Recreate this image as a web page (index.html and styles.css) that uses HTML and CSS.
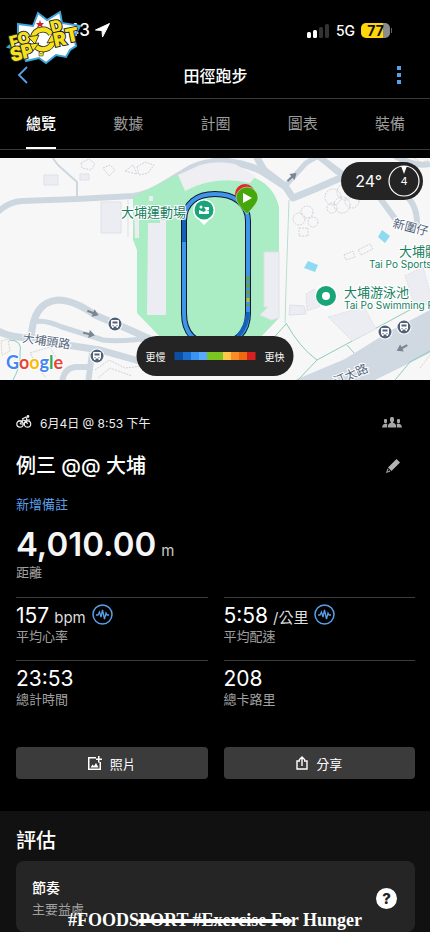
FILE: index.html
```html
<!DOCTYPE html>
<html lang="zh-Hant">
<head>
    <meta charset="UTF-8">
    <title>田徑跑步</title>
    <meta name="viewport" content="width=device-width, initial-scale=1.0">
    <link rel="stylesheet" href="styles.css">
</head>
<body>

    <div class="app">
        <!-- Phone status bar -->
        <div class="status-bar">
            <div class="status-time">
                <span>43</span>
                <svg width="15" height="15" viewBox="0 0 15 15"><path d="M14.500 0.500L7.500 14 7 7.500 0.500 7z" fill="#fff" stroke="#fff" stroke-linejoin="round"/></svg>
            </div>
            <div class="status-right">
                <svg width="23" height="15" viewBox="0 0 23 15">
                    <rect x="0" y="9" width="4" height="6" rx="1.500" fill="#fff"/>
                    <rect x="6" y="7" width="4" height="8" rx="1.500" fill="#fff"/>
                    <rect x="12" y="4" width="4" height="11" rx="1.500" fill="#333"/>
                    <rect x="18" y="1" width="4" height="14" rx="1.500" fill="#333"/>
                </svg>
                <span class="network">5G</span>
                <span class="battery">77</span>
            </div>
        </div>

        <!-- Charity logo -->
        <svg class="logo" width="76" height="58" viewBox="0 0 76 58">
            <path d="M12 15L27 17 32 4 41 11 54 3 56 14 74 17 68 28 70 37 64 41 60 48 50 46 40 54 33 49 20 52 16 42 2 38 12 30z" fill="#fff" stroke="#3da5d9" stroke-width="2"/>
            <path d="M34 11l1 3 3 0-2 2 1 3-3-2-3 2 1-3-2-2 3 0z" fill="#d0212d"/>
            <path d="M33 43l2 2 3-2-1 4-4 0z" fill="#f6e11c" stroke="#222" stroke-width="0.500"/>
            <g class="logo-text">
                <text transform="translate(5 39) rotate(-14)" font-size="16">F</text>
                <text transform="translate(13 36) rotate(-14)" font-size="16">O</text>
                <text transform="translate(46 24) rotate(-14)" font-size="16">D</text>
                <text transform="translate(6 53) rotate(-14)" font-size="19">S</text>
                <text transform="translate(17 50) rotate(-14)" font-size="19">P</text>
            </g>
            <g fill="none">
                <path d="M27 28A10 10 0 0 1 45 25M47 32A10 10 0 0 1 29 36" stroke="#222" stroke-width="6"/>
                <path d="M27 28A10 10 0 0 1 45 25M47 32A10 10 0 0 1 29 36" stroke="#f6e11c" stroke-width="4.500"/>
            </g>
            <path d="M22 28l11-2-4 9zM52 32l-11 2 5-9zM24 35l9-1-6 8z" fill="#f6e11c" stroke="#222" stroke-width="0.800"/>
            <g class="logo-text">
                <text transform="translate(49 38) rotate(-12)" font-size="19">R</text>
                <text transform="translate(61 34) rotate(-12)" font-size="19">T</text>
            </g>
        </svg>

        <header class="nav-bar">
            <button class="icon-btn" aria-label="返回">
                <svg width="12" height="18" viewBox="0 0 12 18"><path d="M10 1L2 9l8 8" fill="none" stroke="#5a9fe8" stroke-width="1.800"/></svg>
            </button>
            <h1>田徑跑步</h1>
            <button class="icon-btn" aria-label="更多">
                <svg width="4" height="18" viewBox="0 0 4 18" fill="#5a9fe8"><path d="M0 0h4v4H0zM0 7h4v4H0zM0 14h4v4H0z"/></svg>
            </button>
        </header>

        <nav class="tabs">
            <a href="#" class="active">總覽</a>
            <a href="#">數據</a>
            <a href="#">計圈</a>
            <a href="#">圖表</a>
            <a href="#">裝備</a>
        </nav>

        <!-- Route map -->
        <div class="map">
            <svg class="map-svg" viewBox="0 0 430 222" preserveAspectRatio="xMidYMid slice">
                <defs>
                    <g id="bus">
                        <circle r="7.500" fill="#fff"/>
                        <circle r="6.500" fill="#50627a"/>
                        <path d="M-3-4h6q1 0 1 1v5.500h-1v1.500h-1.500v-1.500h-3v1.500h-1.500v-1.500h-1V-3q0-1 1-1z" fill="#fff"/>
                        <path d="M-2.500-2.500h5v2h-5zM-2.500 1h1v1h-1zM1.500 1h1v1h-1z" fill="#50627a"/>
                    </g>
                    <path id="arrow" d="M-6-1h6v-3l6 4-6 4V1h-6z" fill="#7a8592"/>
                </defs>
                <rect width="430" height="222" fill="#f8f7f8"/>

                <!-- Roads -->
                <g fill="none" stroke="#cdd7e0" stroke-linejoin="round">
                    <path d="M-2 54Q8 44 22 43L77 41 133 38Q148 36 162 27L190 10Q205 3 220 3" stroke-width="6"/>
                    <path d="M77 40V24L58 7 52-1" stroke-width="2"/>
                    <path d="M212 2Q245 4 263 14L286 29" stroke-width="7"/>
                    <path d="M256-2L264 12 285 28 293 40 315 31 345 18" stroke-width="7"/>
                    <path d="M287 26L306 5 318-2 337 14 345 18" stroke-width="5"/>
                    <path d="M318-2L345 18 380 40 396 62M400 33Q418 44 417 68M395-2Q415 9 430 6" stroke-width="6"/>
                    <path d="M31 183Q32 144 58 142 74 142 95 157L130 172 150 181" stroke-width="7"/>
                    <path d="M33 164Q45 161 62 169L103 182Q122 184 150 180" stroke-width="5"/>
                    <path d="M-2 173Q10 180 33 180L60 186 100 192 150 206" stroke-width="7"/>
                    <path d="M62 226Q63 210 76 209H92M92 195L88 226" stroke-width="6"/>
                </g>
                <path d="M430 152L390 173 345 201 295 222H375L430 195z" fill="#d0d8e2"/>
                <path d="M289 42L286 130 285 165" fill="none" stroke="#b9decf"/>
                <g fill="none" stroke="#8fcdb5">
                    <path d="M286 165Q300 190 317 202L430 141M347 187l7 8M317 202L298 222M286 166L270 184M395 222L410 204 430 193"/>
                    <path d="M9 182Q23 182 20 195 21 208 13 222"/>
                </g>

                <!-- Buildings -->
                <g fill="#ecedf3" stroke="#dfe1e8" stroke-width="1">
                    <path d="M44 17h14v10H44zM80 16h9v6h-9zM101 44h20v31h-20zM128 42v37M290 147l14 1 2 8-17 1z"/>
                    <path d="M306 136l8-5 8 6-3 12-12 4zM405 118l18-9 10 36-18 4zM328 159l36-10 12 22-24 12z" stroke-dasharray="2 1"/>
                </g>
                <g fill="none" stroke="#cfd3d9" stroke-dasharray="2 1">
                    <path d="M81 5l8-4 6 5-4 6-9-2zM103 10l7-3 5 5-6 6zM125 13l8-6 4 9zM137 9l8-5 9 3-6 8-9 2z"/>
                    <circle cx="307" cy="54" r="6"/><circle cx="299" cy="61" r="6"/><circle cx="313" cy="64" r="5"/><path d="M299 70h9v8h-9z"/>
                    <circle cx="333" cy="39" r="8"/><circle cx="345" cy="34" r="8"/><circle cx="342" cy="47" r="8"/><circle cx="352" cy="43" r="7"/><circle cx="332" cy="50" r="5"/>
                    <path d="M344 97l9-4 2 6-9 3zM358 92l12-6 3 5-12 6zM30 195l20-6 8 14-20 7zM36 208l10 12M95 212l14-10 16 8 18-2M98 220l12-10 22 8"/>
                    <path d="M1 183l7-2 2 12-8 4zM414 0l8 5 6-3M424 180l6-4M420 210l10-13" stroke="#ddd5bf"/>
                </g>

                <!-- Sports ground -->
                <path d="M133 39L176 17 215 20 255 20Q274 28 279 49V160L258 182H163L137 155V92L133 82z" fill="#aaecc3"/>
                <path d="M178 17L200 7Q216 2 235 6L256 18 250 25Q215 17 185 33z" fill="#eeeef3"/>
                <g fill="#ecedf3">
                    <path d="M148 65h18v92h-19zM134 48h5v32h-4zM149 38h4v5h-4zM160 62h6v5h-6z"/>
                    <path d="M264 94h15v66l-8 2-11-5 8-8h-4z" stroke="#dce3e4"/>
                </g>
                <path d="M382 72l8 6-5 7-7-6zM308 103l10 4-3 7-11-4z" fill="#8edaf0"/>

                <use href="#arrow" transform="translate(93 155) rotate(22)"/>
                <use href="#arrow" transform="translate(89 176) rotate(12)"/>
                <use href="#arrow" transform="translate(292 19) rotate(-42)"/>
                <use href="#arrow" transform="translate(402 190) rotate(152)"/>
                <use href="#bus" x="115" y="166"/>
                <use href="#bus" x="97" y="198"/>
                <use href="#bus" x="385" y="174"/>
                <use href="#bus" x="404" y="169"/>

                <!-- Lap line -->
                <path d="M184 155V63C184 45 197 36 215 36S248 45 248 63V155C248 174 237 186 215 186S184 174 184 155z" fill="none" stroke="#0c1b33" stroke-width="6"/>
                <path d="M184 155V63C184 45 197 36 215 36S248 45 248 63V155C248 174 237 186 215 186S184 174 184 155z" fill="none" stroke="#3f95ea" stroke-width="4"/>
                <path d="M184 62v22M248 154q-1 14-10 24" fill="none" stroke="#1560b8" stroke-width="4"/>
                <path d="M248 118v30" stroke="#6f9e3c" stroke-width="3" stroke-dasharray="5 2"/>
                <path d="M248 140v4" stroke="#c5b62d" stroke-width="3"/>

                <!-- Place names -->
                <g class="place">
                    <text x="121" y="59">大埔運動場</text>
                    <text x="399" y="98">大埔體育館</text>
                    <text x="369" y="110" class="small">Tai Po Sports Centre</text>
                    <text x="344" y="139">大埔游泳池</text>
                    <text x="344" y="151" class="small">Tai Po Swimming Pool</text>
                </g>
                <g class="street">
                    <text transform="translate(22 184) rotate(8)">大埔頭路</text>
                    <text transform="translate(392 69) rotate(14)">新圍仔</text>
                    <text transform="translate(336 228) rotate(-24)">汀太路</text>
                </g>

                <!-- Pins -->
                <path d="M204 67l-5-5A11 11 0 1 1 209 62z" fill="#fff"/>
                <circle cx="204" cy="52" r="9.500" fill="#1aa578"/>
                <path d="M199 52v4h10v-3l-3-1-2 2zM204 49h5v3h-3z" fill="#fff"/>
                <circle cx="201" cy="49" r="1.500" fill="#fff"/>
                <path d="M326 153l-5-6A11 11 0 1 1 331 147z" fill="#fff"/>
                <circle cx="326" cy="138" r="10" fill="#1aa578"/><circle cx="326" cy="138" r="4" fill="#fff"/>
                <circle cx="245" cy="36" r="10" fill="#e3262d"/>
                <path d="M247 56Q236 45 236 40A11 11 0 0 1 258 40Q258 45 247 56z" fill="#45a70c" stroke="#e4f5d8" stroke-width="0.500"/>
                <path d="M243 35v10l9-5z" fill="#fff"/>

                <text class="google" x="6" y="211"><tspan fill="#4285f4">G</tspan><tspan fill="#ea4335">o</tspan><tspan fill="#fbbc05">o</tspan><tspan fill="#4285f4">g</tspan><tspan fill="#34a853">l</tspan><tspan fill="#ea4335">e</tspan></text>
            </svg>

            <div class="weather">
                <span>24°</span>
                <svg width="32" height="32" viewBox="0 0 32 32">
                    <circle cx="16" cy="16" r="15" fill="none" stroke="#fff" stroke-width="1.200"/>
                    <path d="M13 1h6l-3 8z" fill="#fff"/>
                    <text x="16" y="20">4</text>
                </svg>
            </div>

            <div class="pace-legend">
                <span>更慢</span>
                <div class="pace-scale"></div>
                <span>更快</span>
            </div>
        </div>

        <!-- Activity details -->
        <main class="details">
            <div class="row date-row">
                <svg width="16" height="14" viewBox="0 0 16 14" fill="none" stroke="#eee" stroke-width="1.200">
                    <circle cx="4" cy="9" r="3.200"/><circle cx="11.500" cy="9" r="3.200"/>
                    <path d="M4 9l3-4 3 1 1.500 3M4 9h4l3-5M6 4l4-2 1 3 3 0M2 6h5"/>
                    <circle cx="12" cy="1.500" r="0.800" fill="#eee"/>
                </svg>
                <span class="date">6月4日 @ 8:53 下午</span>
                <svg class="end" width="20" height="11" viewBox="0 0 20 11" fill="#a6a6a6">
                    <rect x="8" y="0" width="4" height="5" rx="1.500"/>
                    <path d="M6 10.500V8q1-2 3-2.500V4h2v1.500q2 .5 3 2.500v2.500z"/>
                    <rect x="2" y="2" width="3" height="4" rx="1"/>
                    <path d="M0 10.500Q.5 7 3.500 6.500L5.200 7v3.500z"/>
                    <rect x="15" y="2" width="3" height="4" rx="1"/>
                    <path d="M20 10.500Q19.500 7 16.500 6.500L14.800 7v3.500z"/>
                </svg>
            </div>
            <div class="row title-row">
                <h2>例三 @@ 大埔</h2>
                <button class="icon-btn end" aria-label="編輯">
                    <svg width="14" height="14" viewBox="0 0 14 14"><path d="M10.500 0L14 3.500 5.500 12 2 8.500zM1.500 9.500L4.500 12.500 0 14z" fill="#b3b3b3"/><path d="M2 10.500l1.500 1.500L1.500 12.500z" fill="#000"/></svg>
                </button>
            </div>
            <a href="#" class="add-note">新增備註</a>

            <div class="distance">4,010.00 <small>m</small></div>
            <div class="label">距離</div>

            <div class="metrics">
                <div class="metric">
                    <div class="value">157 <small>bpm</small>
                        <svg width="21" height="21" viewBox="0 0 21 21" fill="none" stroke="#5a9fe8"><circle cx="10.500" cy="10.500" r="9.500" stroke-width="1.500"/><path d="M4 11h2l1.500-3 1.500 5L10.500 6l2 9 1.500-6 1 2h2" stroke-width="1.300"/></svg>
                    </div>
                    <div class="label">平均心率</div>
                </div>
                <div class="metric">
                    <div class="value">5:58 <small>/公里</small>
                        <svg width="21" height="21" viewBox="0 0 21 21" fill="none" stroke="#5a9fe8"><circle cx="10.500" cy="10.500" r="9.500" stroke-width="1.500"/><path d="M4 11h2l1.500-3 1.500 5L10.500 6l2 9 1.500-6 1 2h2" stroke-width="1.300"/></svg>
                    </div>
                    <div class="label">平均配速</div>
                </div>
                <div class="metric">
                    <div class="value">23:53</div>
                    <div class="label">總計時間</div>
                </div>
                <div class="metric">
                    <div class="value">208</div>
                    <div class="label">總卡路里</div>
                </div>
            </div>

            <div class="actions">
                <button class="action-btn">
                    <svg width="14" height="14" viewBox="0 0 14 14" fill="#fff"><path d="M0 1h8v1.500H1.500v10h10V6H13v8H0zM10 0h1.500v2.500H14V4h-2.500v2.500H10V4H8V2.500h2zM2.500 11.500l2-3 1.500 1.500 2-3 2.500 4.500z"/></svg>
                    照片
                </button>
                <button class="action-btn">
                    <svg width="12" height="14" viewBox="0 0 12 14" fill="none" stroke="#fff" stroke-width="1.400"><path d="M4 5H1v8h10V5H8M6 10V1M3 4l3-3 3 3"/></svg>
                    分享
                </button>
            </div>
        </main>

        <!-- Evaluation -->
        <section class="evaluation">
            <h2>評估</h2>
            <div class="card">
                <div>
                    <h3>節奏</h3>
                    <div class="label">主要益處</div>
                </div>
                <button class="help end" aria-label="說明">?</button>
            </div>
        </section>

        <div class="hashtags">#FOODSPORT #Exercise For Hunger</div>
        <div class="home-bar"></div>
    </div>

</body>
</html>
```
FILE: styles.css
```css
/* General Styles */
* {
    box-sizing: border-box;
}

body {
    margin: 0;
    background-color: #000;
    color: #fff;
    font-family: Inter, "Noto Sans CJK TC", sans-serif;
}

h1, h2, h3 {
    margin: 0;
    font-weight: 500;
}

a {
    text-decoration: none;
}

button {
    border: none;
    color: #fff;
    font-family: inherit;
    cursor: pointer;
}

svg {
    display: block;
    flex-shrink: 0;
}

.app {
    position: relative;
    overflow: hidden;
}

.row {
    display: flex;
    align-items: center;
}

.end {
    margin-left: auto;
}

/* Status bar and header */
.status-bar {
    display: flex;
    justify-content: space-between;
    align-items: center;
    height: 52px;
    padding: 8px 40px 0 68px;
}

.status-time, .status-right {
    display: flex;
    align-items: center;
    gap: 6px;
}

.status-time {
    gap: 5px;
    font-size: 17px;
    font-weight: 500;
}

.network {
    font-size: 14px;
    font-weight: 500;
}

.battery {
    position: relative;
    width: 29px;
    border-radius: 5px;
    background: linear-gradient(to right, #ffd60a 77%, #8c8c8c 77%);
    color: #111;
    font-size: 14px;
    font-weight: 700;
    line-height: 15px;
    text-align: center;
}

.battery::after {
    content: "";
    position: absolute;
    right: -2px;
    top: 5px;
    width: 1px;
    height: 5px;
    background-color: #666;
}

.logo {
    position: absolute;
    left: 6px;
    top: 9px;
}

.logo-text {
    font-family: Inter, sans-serif;
    font-weight: 900;
    fill: #f6e11c;
    stroke: #222;
    stroke-width: 2px;
    paint-order: stroke;
}

.nav-bar {
    display: flex;
    justify-content: space-between;
    align-items: center;
    height: 47px;
    padding: 0 29px 0 17px;
    border-bottom: 1px solid #3a3a3a;
}

.nav-bar h1 {
    margin-left: 5px;
    font-size: 16px;
}

.icon-btn {
    padding: 0;
    background: none;
}

.tabs {
    display: flex;
    justify-content: space-between;
    height: 51px;
    padding: 0 25px 0 26px;
    border-bottom: 1px solid #3a3a3a;
}

.tabs a {
    color: #9c9c9c;
    font-size: 15px;
    line-height: 50px;
}

.tabs .active {
    border-bottom: 2px solid #fff;
    color: #fff;
    font-weight: 500;
}

/* Map */
.map {
    position: relative;
    height: 222px;
    margin-top: 8px;
}

.map-svg {
    width: 100%;
    height: 100%;
}

.place {
    fill: #168060;
    stroke: #fff;
    stroke-width: 2px;
    paint-order: stroke;
    font-size: 13px;
}

.place .small {
    font-size: 10px;
}

.street {
    fill: #52647c;
    stroke: #fff;
    stroke-width: 2px;
    paint-order: stroke;
    font-size: 12px;
}

.google {
    font-family: Lato, sans-serif;
    font-size: 18px;
    font-weight: 700;
    stroke: #fff;
    stroke-width: 2px;
    paint-order: stroke;
}

.weather, .pace-legend {
    position: absolute;
    display: flex;
    align-items: center;
    background-color: #242424;
    border-radius: 20px;
}

.weather {
    top: 4px;
    right: 7px;
    gap: 6px;
    height: 38px;
    padding: 0 3px 0 14px;
    font-size: 16px;
}

.weather text {
    fill: #fff;
    font-size: 11px;
    text-anchor: middle;
}

.pace-legend {
    left: 50%;
    bottom: 4px;
    gap: 9px;
    height: 40px;
    padding: 0 9px;
    font-size: 10px;
    transform: translateX(-50%);
}

.pace-scale {
    width: 81px;
    height: 8px;
    background: linear-gradient(to right, #0b4ea2 10%, #1a6fd0 10% 20%, #3b92ef 20% 30%, #58a9ff 30% 40%, #7ac520 40% 60%, #ffc64a 60% 70%, #fb8c25 70% 80%, #ee6a10 80% 90%, #d92020 90%);
}

/* Details */
.details {
    padding: 30px 15px 32px 16px;
}

.date-row {
    gap: 8px;
    height: 24px;
    padding-right: 13px;
}

.date {
    color: #eee;
    font-size: 12px;
}

.title-row {
    height: 28px;
    margin: 18px 0 14px;
    padding-right: 15px;
}

.title-row h2, .evaluation h2 {
    font-size: 20px;
    line-height: 28px;
}

.add-note {
    display: block;
    color: #5a9fe8;
    font-size: 13px;
    line-height: 20px;
}

.distance {
    display: flex;
    align-items: baseline;
    gap: 5px;
    height: 36px;
    margin-top: 12px;
    color: #f5f5f5;
    font-size: 33px;
    font-weight: 600;
    line-height: 36px;
}

.distance small {
    color: #ccc;
    font-size: 15px;
    font-weight: 400;
    line-height: 20px;
}

.label {
    color: #a0a0a0;
    font-size: 13px;
    line-height: 20px;
}

.metrics {
    display: grid;
    grid-template-columns: 1fr 1fr;
    column-gap: 16px;
    margin-top: 15px;
}

.metric {
    height: 63px;
    padding-top: 6px;
    border-top: 1px solid #3c3c3c;
}

.value {
    display: flex;
    align-items: baseline;
    gap: 5px;
    height: 22px;
    font-size: 21px;
    line-height: 24px;
}

.value small {
    color: #ddd;
    font-size: 15px;
}

.value svg {
    align-self: flex-start;
    margin-left: 1px;
}

.actions {
    display: grid;
    grid-template-columns: 1fr 1fr;
    gap: 16px;
    margin-top: 24px;
}

.action-btn {
    display: flex;
    justify-content: center;
    align-items: center;
    gap: 8px;
    height: 32px;
    background-color: #3b3b3b;
    border-radius: 4px;
    font-size: 13px;
}

/* Evaluation */
.evaluation {
    padding: 16px 15px 0 16px;
    background-color: #111;
}

.card {
    display: flex;
    align-items: center;
    margin-top: 6px;
    padding: 16px 18px 13px 16px;
    background-color: #252525;
    border-radius: 8px;
}

.card h3 {
    font-size: 14px;
    line-height: 22px;
}

.help {
    width: 21px;
    height: 21px;
    padding: 0;
    background-color: #fff;
    border-radius: 50%;
    color: #222;
    font-size: 15px;
    font-weight: 800;
    line-height: 21px;
}

.hashtags {
    position: absolute;
    right: 0;
    bottom: 2px;
    left: 0;
    font-family: "Liberation Serif", serif;
    font-size: 18px;
    font-weight: 700;
    line-height: 20px;
    text-align: center;
}

.home-bar {
    position: absolute;
    bottom: 9px;
    left: 32%;
    width: 36%;
    height: 4px;
    background-color: #fff;
    border-radius: 2px;
}
```
